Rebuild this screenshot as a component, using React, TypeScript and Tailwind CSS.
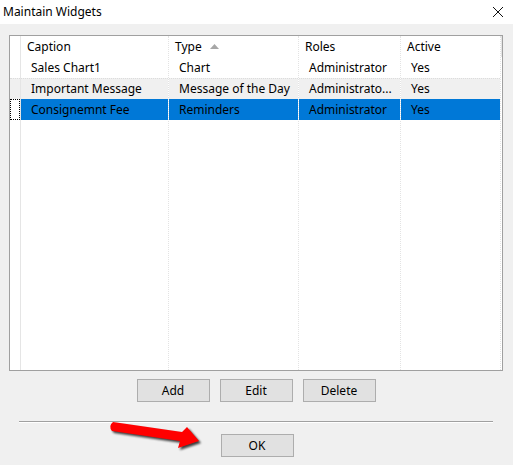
import React from 'react'

const columns = [
  { key: 'caption', label: 'Caption', width: 'w-[148px]' },
  { key: 'type', label: 'Type', width: 'w-[130px]' },
  { key: 'roles', label: 'Roles', width: 'w-[102px]' },
  { key: 'active', label: 'Active', width: 'w-[100px]' },
]

const rows = [
  { caption: 'Sales Chart1', type: 'Chart', roles: 'Administrator', active: 'Yes' },
  { caption: 'Important Message', type: 'Message of the Day', roles: 'Administrato...', active: 'Yes' },
  { caption: 'Consignemnt Fee', type: 'Reminders', roles: 'Administrator', active: 'Yes' },
]

const selected = 2

function rowBg(i: number) {
  if (i === selected) return 'bg-[#0078d7]'
  if (i === 1) return 'bg-[#f0f0f0]'
  return 'bg-white'
}

function WinButton({ label }: { label: string }) {
  return (
    <button className="w-[73px] h-[23px] bg-[#e1e1e1] border border-[#adadad] text-[12px] text-black leading-none">
      {label}
    </button>
  )
}

export default function App() {
  return (
    <div
      className="relative w-[513px] h-[465px] bg-[#f0f0f0] flex flex-col overflow-hidden text-black"
      style={{ fontFamily: '"Noto Sans", "Open Sans", sans-serif' }}
    >
      {/* Title bar */}
      <div className="h-[24px] bg-white flex items-center justify-between pl-[3px] pr-[9px]">
        <span className="text-[12px]">Maintain Widgets</span>
        <svg width="12" height="12" viewBox="0 0 12 12">
          <path d="M1 1 L11 11 M11 1 L1 11" stroke="#111" strokeWidth="1" />
        </svg>
      </div>

      {/* Grid */}
      <div className="pt-[11px] pl-[9px]">
        <div className="w-[494px] h-[336px] border border-[#a0a0a0] bg-white flex text-[12px]">
          {/* indicator column */}
          <div className="w-[11px] flex flex-col border-r border-[#e5e5e5]">
            <div className="h-[21px]" />
            <div className="h-[21px]" />
            <div className="h-[21px] bg-[#f0f0f0] border-t border-dotted border-[#dcdcdc]" />
            <div className="h-[21px] border border-dotted border-black" />
          </div>
          {columns.map((col) => (
            <div key={col.key} className={`${col.width} flex flex-col border-r border-dotted border-[#e3e3e3]`}>
              <div className="h-[21px] flex items-center pl-[6px] pt-[2px] border-b border-white">
                <span>{col.label}</span>
                {col.key === 'type' && (
                  <svg className="ml-[8px] mb-[2px]" width="9" height="5" viewBox="0 0 9 5">
                    <path d="M0 5 L4.5 0 L9 5 Z" fill="#a7a7a7" />
                  </svg>
                )}
              </div>
              {rows.map((r, i) => (
                <div
                  key={i}
                  className={`h-[21px] flex items-center pl-[10px] whitespace-nowrap overflow-hidden ${rowBg(i)} ${i === 1 ? 'border-t border-dotted border-[#dcdcdc]' : ''}`}
                >
                  {r[col.key as keyof typeof r]}
                </div>
              ))}
            </div>
          ))}
          <div className="flex-1 flex flex-col">
            <div className="h-[21px] border-l border-[#e5e5e5]" />
          </div>
        </div>
      </div>

      {/* Buttons */}
      <div className="flex justify-center gap-[10px] mt-[8px] pr-[1px]">
        <WinButton label="Add" />
        <WinButton label="Edit" />
        <WinButton label="Delete" />
      </div>

      <div className="mt-[19px] mx-[19px] mr-[20px] h-[2px] border-t border-[#a0a0a0] border-b border-b-white" />

      <div className="flex justify-center mt-[11px] pl-[1px]">
        <WinButton label="OK" />
      </div>

      {/* annotation arrow */}
      <svg className="absolute left-[100px] top-[410px]" width="110" height="45" viewBox="0 0 110 45">
        <defs>
          <filter id="sh" x="-20%" y="-40%" width="140%" height="180%">
            <feGaussianBlur stdDeviation="1.2" />
          </filter>
        </defs>
        <path
          d="M13 12 L82 22 L87 17 L99 31 L78 38 L80 31 L12 21 Q8 16 13 12 Z"
          fill="#000"
          opacity="0.75"
          transform="translate(2 2)"
          filter="url(#sh)"
        />
        <path d="M13 12 L82 22 L87 17 L99 31 L78 38 L80 31 L12 21 Q8 16 13 12 Z" fill="#ff0000" />
      </svg>
    </div>
  )
}
